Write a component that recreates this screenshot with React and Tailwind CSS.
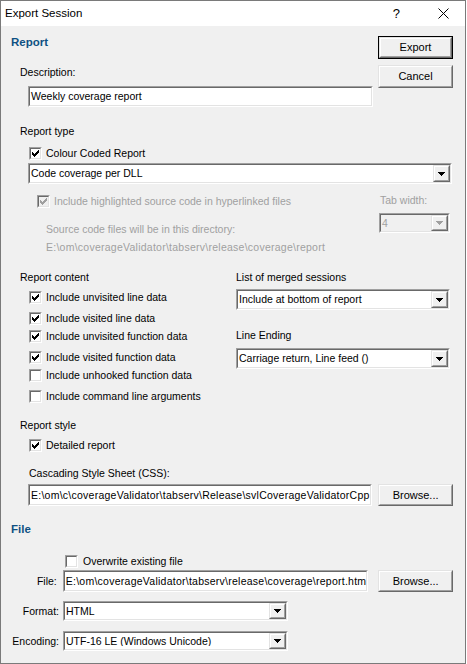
import React from 'react';

// Export Session dialog - classic Win32 look

const font = { fontFamily: '"Liberation Sans", Arial, sans-serif' };

const Sunken = ({ className = '', inner = 'bg-white', children }) => (
    <div className={`border border-t-[#a0a0a0] border-l-[#a0a0a0] border-b-white border-r-white ${className}`}>
        <div className={`h-full border border-t-[#696969] border-l-[#696969] border-b-[#e3e3e3] border-r-[#e3e3e3] ${inner}`}>
            {children}
        </div>
    </div>
);

const Raised = ({ className = '', children }) => (
    <div className={`border border-t-[#e3e3e3] border-l-[#e3e3e3] border-b-[#696969] border-r-[#696969] bg-[#f0f0f0] ${className}`}>
        <div className="h-full border border-t-white border-l-white border-b-[#a0a0a0] border-r-[#a0a0a0] flex items-center justify-center">
            {children}
        </div>
    </div>
);

const Button = ({ label, isDefault, className = '' }) => {
    if (isDefault) {
        return (
            <div className={`border border-black ${className}`}>
                <Raised className="h-full">
                    <span className="text-[11px] text-black leading-none">{label}</span>
                </Raised>
            </div>
        );
    }
    return (
        <Raised className={className}>
            <span className="text-[11px] text-black leading-none">{label}</span>
        </Raised>
    );
};

const Arrow = ({ color = '#000' }) => (
    <svg width="7" height="4" viewBox="0 0 7 4" shapeRendering="crispEdges">
        <path d="M0 0h7v1H0zM1 1h5v1H1zM2 2h3v1H2zM3 3h1v1H3z" fill={color} />
    </svg>
);

const Combo = ({ value, className = '', disabled }) => (
    <Sunken className={className} inner={disabled ? 'bg-[#f0f0f0]' : 'bg-white'}>
        <div className="flex h-full items-center">
            <span className={`flex-1 pl-[1px] text-[10.5px] leading-none whitespace-nowrap overflow-hidden ${disabled ? 'text-[#a0a0a0]' : 'text-black'}`}>{value}</span>
            <Raised className="w-[17px] h-full">
                <Arrow color={disabled ? '#a0a0a0' : '#000'} />
            </Raised>
        </div>
    </Sunken>
);

const TextField = ({ value, className = '', path }) => (
    <Sunken className={className}>
        <div className="h-full flex items-center pl-[1px] overflow-hidden">
            <span className={`text-[10.5px] text-black leading-none whitespace-nowrap ${path ? 'tracking-[0.25px]' : ''}`}>{value}</span>
        </div>
    </Sunken>
);

const Check = ({ checked, disabled }) => (
    <Sunken className="w-[13px] h-[13px] shrink-0" inner={disabled ? 'bg-[#f0f0f0]' : 'bg-white'}>
        {checked && (
            <svg width="9" height="9" viewBox="0 0 9 9" shapeRendering="crispEdges" className="block">
                <path
                    d="M1 3h1v3H1zM2 4h1v3H2zM3 5h1v3H3zM4 4h1v3H4zM5 3h1v3H5zM6 2h1v3H6zM7 1h1v3H7z"
                    fill={disabled ? '#a0a0a0' : '#000'}
                />
            </svg>
        )}
    </Sunken>
);

const CheckRow = ({ label, checked, disabled, className = '', gap = 'gap-[4px]' }) => (
    <div className={`flex items-center h-[14px] ${gap} ${className}`}>
        <Check checked={checked} disabled={disabled} />
        <span className={`text-[10.5px] leading-none whitespace-nowrap ${disabled ? 'text-[#a0a0a0]' : 'text-black'}`}>{label}</span>
    </div>
);

const Label = ({ children, className = '' }) => (
    <div className={`h-[14px] flex items-center text-[10.5px] leading-none text-black whitespace-nowrap ${className}`}>{children}</div>
);

const Heading = ({ children, className = '' }) => (
    <div className={`h-[16px] flex items-center text-[11.5px] font-bold text-[#0f5083] leading-none ${className}`}>{children}</div>
);

export default function App() {
    return (
        <div style={font} className="w-[466px] h-[664px] border border-[#7a7a7a] bg-[#f0f0f0] flex flex-col overflow-hidden">
            {/* title bar */}
            <div className="h-[25px] bg-white flex items-center shrink-0">
                <span className="ml-[4px] text-[11.5px] text-black">Export Session</span>
                <span className="ml-auto text-[13px] text-black mr-[38px]">?</span>
                <svg width="11" height="11" viewBox="0 0 11 11" className="mr-[16px]">
                    <path d="M0.5 0.5L10.5 10.5M10.5 0.5L0.5 10.5" stroke="#000" strokeWidth="1" />
                </svg>
            </div>

            <div className="pl-[10px] pr-[12px] flex flex-col">
                {/* Report header + description + buttons */}
                <div className="flex">
                    <div className="flex-1 flex flex-col">
                        <Heading className="mt-[9px]">Report</Heading>
                        <Label className="mt-[14px] ml-[9px]">Description:</Label>
                        <TextField value="Weekly coverage report" className="mt-[7px] ml-[17px] w-[345px] h-[21px]" />
                    </div>
                    <div className="w-[75px] pt-[10px] flex flex-col gap-[6px]">
                        <Button label="Export" isDefault className="h-[23px]" />
                        <Button label="Cancel" className="h-[23px]" />
                    </div>
                </div>

                {/* Report type */}
                <Label className="mt-[17px] ml-[9px]">Report type</Label>
                <CheckRow label="Colour Coded Report" checked className="mt-[8px] ml-[18px]" />
                <Combo value="Code coverage per DLL" className="mt-[3px] ml-[17px] w-[424px] h-[21px]" />

                <div className="flex mt-[9px]">
                    <div className="flex-1 flex flex-col pt-[1px]">
                        <CheckRow label="Include highlighted source code in hyperlinked files" checked disabled className="ml-[26px]" />
                        <div className="mt-[14px] ml-[35px] h-[14px] flex items-center text-[10.5px] leading-none text-[#a0a0a0]">Source code files will be in this directory:</div>
                        <div className="mt-[4px] ml-[35px] h-[14px] flex items-center text-[10.5px] leading-none tracking-[0.25px] text-[#a0a0a0]">E:\om\coverageValidator\tabserv\release\coverage\report</div>
                    </div>
                    <div className="w-[71px] mr-[3px] flex flex-col">
                        <div className="h-[14px] pl-[1px] flex items-center text-[10.5px] leading-none text-[#a0a0a0]">Tab width:</div>
                        <Combo value="4" disabled className="mt-[6px] h-[20px]" />
                    </div>
                </div>

                {/* Report content / merged sessions / line ending */}
                <div className="flex mt-[16px]">
                    <div className="w-[225px] flex flex-col">
                        <Label className="ml-[9px]">Report content</Label>
                        <CheckRow label="Include unvisited line data" checked className="mt-[6px] ml-[18px]" />
                        <CheckRow label="Include visited line data" checked className="mt-[7px] ml-[18px]" />
                        <CheckRow label="Include unvisited function data" checked className="mt-[4px] ml-[18px]" />
                        <CheckRow label="Include visited function data" checked className="mt-[7px] ml-[18px]" />
                        <CheckRow label="Include unhooked function data" className="mt-[4px] ml-[18px]" />
                        <CheckRow label="Include command line arguments" className="mt-[7px] ml-[18px]" />
                    </div>
                    <div className="w-[214px] flex flex-col">
                        <Label>List of merged sessions</Label>
                        <Combo value="Include at bottom of report" className="mt-[5px] h-[21px]" />
                        <Label className="mt-[18px]">Line Ending</Label>
                        <Combo value="Carriage return, Line feed ()" className="mt-[6px] h-[21px]" />
                    </div>
                </div>

                {/* Report style */}
                <Label className="mt-[15px] ml-[9px]">Report style</Label>
                <CheckRow label="Detailed report" checked className="mt-[6px] ml-[18px]" />
                <Label className="mt-[14px] ml-[18px]">Cascading Style Sheet (CSS):</Label>
                <div className="flex mt-[4px] ml-[17px] gap-[6px]">
                    <TextField path value="E:\om\c\coverageValidator\tabserv\Release\svlCoverageValidatorCpp" className="w-[345px] h-[22px]" />
                    <Button label="Browse..." className="w-[75px] h-[22px]" />
                </div>

                {/* File */}
                <Heading className="mt-[16px]">File</Heading>
                <CheckRow label="Overwrite existing file" className="mt-[16px] ml-[54px]" gap="gap-[5px]" />
                <div className="flex items-center mt-[2px]">
                    <div className="w-[46px] mr-[6px] text-right text-[10.5px] leading-none text-black">File:</div>
                    <TextField path value="E:\om\coverageValidator\tabserv\release\coverage\report.htm" className="w-[306px] h-[22px]" />
                    <Button label="Browse..." className="ml-[10px] w-[75px] h-[22px]" />
                </div>
                <div className="flex items-center mt-[9px]">
                    <div className="w-[48px] mr-[4px] text-right text-[10.5px] leading-none text-black">Format:</div>
                    <Combo value="HTML" className="w-[225px] h-[20px]" />
                </div>
                <div className="flex items-center mt-[10px]">
                    <div className="w-[48px] mr-[4px] text-right text-[10.5px] leading-none text-black">Encoding:</div>
                    <Combo value="UTF-16 LE (Windows Unicode)" className="w-[225px] h-[20px]" />
                </div>
            </div>
        </div>
    );
}
